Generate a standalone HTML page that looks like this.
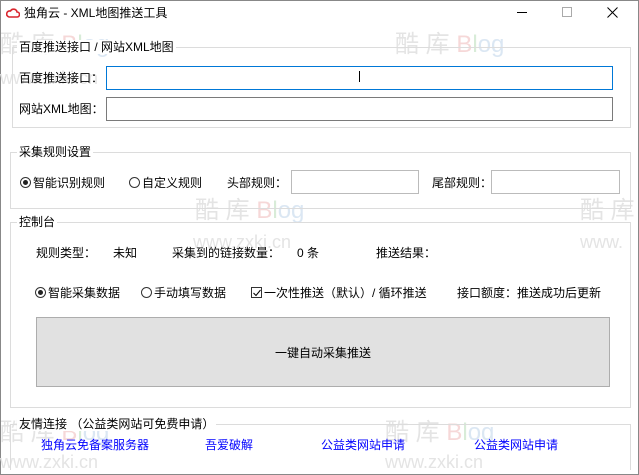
<!DOCTYPE html>
<html><head><meta charset="utf-8"><style>
*{margin:0;padding:0;box-sizing:border-box}
body{width:639px;height:475px;background:#fff;font-family:"Liberation Sans","Noto Sans CJK SC",sans-serif;font-size:12px;color:#000;position:relative;overflow:hidden}
.a{position:absolute;white-space:nowrap;line-height:14px}
.win{position:absolute;left:0;top:0;width:639px;height:475px;border:1px solid #888}
.grp{position:absolute;border:1px solid #dcdcdc}
.lbl{position:absolute;background:#fff;padding:0 2px;line-height:14px;white-space:nowrap}
.inp{position:absolute;border:1px solid #7a7a7a;background:#fff}
.rad{display:inline-block;width:11px;height:11px;border:1px solid #333;border-radius:50%;vertical-align:-1px;margin-right:2px;position:relative}
.rad.on::after{content:"";position:absolute;left:2px;top:2px;width:5px;height:5px;border-radius:50%;background:#222}
.chk{display:inline-block;width:11px;height:11px;border:1px solid #333;vertical-align:-1px;margin-right:2px;position:relative}
.lnk{color:#0000ff}
.wm{position:absolute;color:#e4e4e4;font-size:24px;white-space:nowrap;line-height:26px}
.wm2{position:absolute;color:#e4e4e4;font-size:18px;white-space:nowrap;line-height:20px}
</style></head><body>
<div class="win"></div>
<div class="wm" style="left:0px;top:32px">酷 库 <span style="color:#f6d8d8">B</span><span style="color:#d8ecd8">l</span><span style="color:#dbe7f3">og</span></div>
<div class="wm2" style="left:0px;top:68px">www.zxki.cn</div>
<div class="wm" style="left:395px;top:32px">酷 库 <span style="color:#f6d8d8">B</span><span style="color:#d8ecd8">l</span><span style="color:#dbe7f3">og</span></div>
<div class="wm2" style="left:392px;top:68px">www.zxki.cn</div>
<div class="wm" style="left:195px;top:198px">酷 库 <span style="color:#f6d8d8">B</span><span style="color:#d8ecd8">l</span><span style="color:#dbe7f3">og</span></div>
<div class="wm2" style="left:193px;top:232px">www.zxki.cn</div>
<div class="wm" style="left:580px;top:198px">酷 库</div>
<div class="wm2" style="left:580px;top:232px">www.</div>
<div class="wm" style="left:0px;top:420px">酷 库 <span style="color:#f6d8d8">B</span><span style="color:#d8ecd8">l</span><span style="color:#dbe7f3">og</span></div>
<div class="wm2" style="left:0px;top:452px">www.zxki.cn</div>
<div class="wm" style="left:385px;top:420px">酷 库 <span style="color:#f6d8d8">B</span><span style="color:#d8ecd8">l</span><span style="color:#dbe7f3">og</span></div>
<div class="wm2" style="left:385px;top:452px">www.zxki.cn</div>

<svg class="a" style="left:6px;top:8px" width="14" height="10" viewBox="0 0 14 10"><path d="M3 9h8a2.5 2.5 0 0 0 0-5 3.5 3.5 0 0 0-6.5-1A3 3 0 0 0 3 9z" fill="none" stroke="#d9262e" stroke-width="1.6"/></svg>
<div class="a" style="left:24px;top:6px">独角云 - XML地图推送工具</div>
<div class="a" style="left:517px;top:12px;width:10px;border-top:1px solid #000"></div>
<div class="a" style="left:562px;top:7px;width:10px;height:10px;border:1px solid #aaa"></div>
<svg class="a" style="left:607px;top:7px" width="11" height="11"><path d="M0.5 0.5L10.5 10.5M10.5 0.5L0.5 10.5" stroke="#000" stroke-width="1"/></svg>

<div class="grp" style="left:12px;top:47px;width:619px;height:81px"></div>
<div class="lbl" style="left:17px;top:40px">百度推送接口 / 网站XML地图</div>
<div class="a" style="left:19px;top:71px">百度推送接口：</div>
<div class="inp" style="left:106px;top:66px;width:507px;height:24px;border-color:#0078d7"></div>
<div class="a" style="left:359px;top:71px;width:1px;height:11px;background:#000"></div>
<div class="a" style="left:19px;top:102px">网站XML地图：</div>
<div class="inp" style="left:106px;top:97px;width:507px;height:24px"></div>

<div class="grp" style="left:10px;top:152px;width:621px;height:57px"></div>
<div class="lbl" style="left:17px;top:145px">采集规则设置</div>
<div class="a" style="left:20px;top:176px"><span class="rad on"></span>智能识别规则</div>
<div class="a" style="left:129px;top:176px"><span class="rad"></span>自定义规则</div>
<div class="a" style="left:227px;top:176px">头部规则：</div>
<div class="inp" style="left:291px;top:170px;width:128px;height:24px;border-color:#bbb"></div>
<div class="a" style="left:432px;top:176px">尾部规则：</div>
<div class="inp" style="left:491px;top:170px;width:129px;height:24px;border-color:#bbb"></div>

<div class="grp" style="left:10px;top:222px;width:621px;height:186px"></div>
<div class="lbl" style="left:17px;top:215px">控制台</div>
<div class="a" style="left:36px;top:246px">规则类型：</div>
<div class="a" style="left:113px;top:246px">未知</div>
<div class="a" style="left:172px;top:246px">采集到的链接数量：</div>
<div class="a" style="left:297px;top:246px">0 条</div>
<div class="a" style="left:376px;top:246px">推送结果：</div>
<div class="a" style="left:35px;top:286px"><span class="rad on"></span>智能采集数据</div>
<div class="a" style="left:141px;top:286px"><span class="rad"></span>手动填写数据</div>
<div class="a" style="left:251px;top:286px"><span class="chk"><svg style="position:absolute;left:1px;top:1px" width="8" height="8"><path d="M0.5 4L3 6.5L7.5 1" fill="none" stroke="#000"/></svg></span>一次性推送（默认）/ 循环推送</div>
<div class="a" style="left:457px;top:286px">接口额度：推送成功后更新</div>
<div class="a" style="left:36px;top:317px;width:574px;height:70px;background:#e1e1e1;border:1px solid #adadad"></div>
<div class="a" style="left:36px;top:346px;width:574px;text-align:center">一键自动采集推送</div>

<div class="grp" style="left:10px;top:424px;width:621px;height:46px;border-bottom:none"></div>
<div class="lbl" style="left:17px;top:417px">友情连接 （公益类网站可免费申请）</div>
<div class="a lnk" style="left:41px;top:438px">独角云免备案服务器</div>
<div class="a lnk" style="left:205px;top:438px">吾爱破解</div>
<div class="a lnk" style="left:321px;top:438px">公益类网站申请</div>
<div class="a lnk" style="left:474px;top:438px">公益类网站申请</div>
</body></html>
